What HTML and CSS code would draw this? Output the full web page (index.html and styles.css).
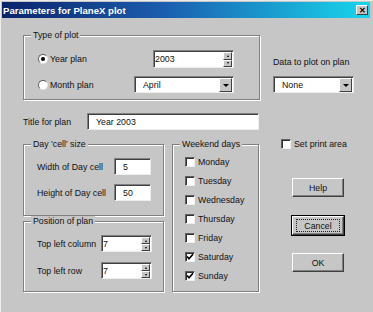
FILE: index.html
```html
<!DOCTYPE html>
<html>

<head>
    <meta charset="utf-8">
    <meta name="viewport" content="width=device-width">
    <title>Parameters for PlaneX plot</title>
    <link rel="stylesheet" href="styles.css">
</head>

<body>
    <div class="window">

        <div class="titlebar">
            <span class="title">Parameters for PlaneX plot</span>
            <span class="close">&#x2715;</span>
        </div>

        <div class="dialog">

            <div class="top-row">
                <fieldset class="group plot-type">
                    <legend>Type of plot</legend>
                    <div class="plot-grid">
                        <div class="opt"><span class="radio on"></span>Year plan</div>
                        <div class="box spin year">
                            <span class="val">2003</span>
                            <span class="spin-btns"><span class="sb up"></span><span class="sb down"></span></span>
                        </div>
                        <div class="opt"><span class="radio"></span>Month plan</div>
                        <div class="box combo month">
                            <span class="val">April</span>
                            <span class="drop"></span>
                        </div>
                    </div>
                </fieldset>

                <div class="data-col">
                    <div class="lbl">Data to plot on plan</div>
                    <div class="box combo data">
                        <span class="val">None</span>
                        <span class="drop"></span>
                    </div>
                </div>
            </div>

            <div class="title-row">
                <span class="title-lbl">Title for plan</span>
                <div class="box plan-title"><span class="val">Year 2003</span></div>
            </div>

            <div class="bottom-row">

                <div class="left-col">
                    <fieldset class="group day-cell">
                        <legend>Day 'cell' size</legend>
                        <div class="field-grid cell-grid">
                            <span>Width of Day cell</span>
                            <div class="box num"><span class="val">5</span></div>
                            <span>Height of Day cell</span>
                            <div class="box num"><span class="val">50</span></div>
                        </div>
                    </fieldset>

                    <fieldset class="group position">
                        <legend>Position of plan</legend>
                        <div class="field-grid pos-grid">
                            <span>Top left column</span>
                            <div class="box spin pos">
                                <span class="val">7</span>
                                <span class="spin-btns"><span class="sb up"></span><span class="sb down"></span></span>
                            </div>
                            <span>Top left row</span>
                            <div class="box spin pos">
                                <span class="val">7</span>
                                <span class="spin-btns"><span class="sb up"></span><span class="sb down"></span></span>
                            </div>
                        </div>
                    </fieldset>
                </div>

                <fieldset class="group weekend">
                    <legend>Weekend days</legend>
                    <div class="days">
                        <div class="day"><span class="check"></span>Monday</div>
                        <div class="day"><span class="check"></span>Tuesday</div>
                        <div class="day"><span class="check"></span>Wednesday</div>
                        <div class="day"><span class="check"></span>Thursday</div>
                        <div class="day"><span class="check"></span>Friday</div>
                        <div class="day"><span class="check on"><svg viewBox="0 0 8 8"><path d="M1 3.5 L3 5.8 L7 1.2"/></svg></span>Saturday</div>
                        <div class="day"><span class="check on"><svg viewBox="0 0 8 8"><path d="M1 3.5 L3 5.8 L7 1.2"/></svg></span>Sunday</div>
                    </div>
                </fieldset>

                <div class="right-col">
                    <div class="day print"><span class="check"></span>Set print area</div>
                    <div class="btn help">Help</div>
                    <div class="btn cancel"><span class="focus">Cancel</span></div>
                    <div class="btn ok">OK</div>
                </div>

            </div>
        </div>
    </div>
</body>

</html>
```

FILE: styles.css
```css
* {
    box-sizing: border-box;
}

body {
    margin: 0;
    background-color: #c6c6c6;
    font-family: "Liberation Sans", Arial, sans-serif;
    font-size: 8.8px;
    color: #111;
}

.window {
    width: 373px;
    height: 312px;
    padding: 2px 3px 0 2px;
    background-color: #c6c6c6;
    box-shadow: inset 1px 1px 0 #ececec;
    overflow: hidden;
}

/* title bar */

.titlebar {
    height: 16px;
    display: flex;
    align-items: center;
    justify-content: space-between;
    padding: 0 2px 0 1px;
    background: linear-gradient(to right, #0a246a 0%, #1c5fb0 45%, #18d6ec 100%);
}

.title {
    color: #fff;
    font-weight: bold;
    font-size: 9.6px;
}

.close {
    width: 12px;
    height: 10px;
    display: flex;
    align-items: center;
    justify-content: center;
    font-size: 8px;
    font-weight: bold;
    color: #000;
    background-color: #c6c6c6;
    border: 1px solid;
    border-color: #fff #404040 #404040 #fff;
}

/* dialog body */

.dialog {
    padding: 12px 0 0 19px;
}

.group {
    margin: 0;
    padding: 0;
    min-width: 0;
    border: 1px solid #808080;
    box-shadow: 1px 1px 0 #fff, inset 1px 1px 0 #fff;
}

.group legend {
    margin-left: 7px;
    padding: 0 2px;
    line-height: 10px;
    background-color: #c6c6c6;
}

.box {
    display: flex;
    align-items: center;
    background-color: #fff;
    border: 1px solid;
    border-color: #808080 #eee #eee #808080;
    box-shadow: inset 1px 1px 0 #404040;
}

.val {
    padding-left: 8px;
    line-height: 10px;
    flex: 1;
}

/* spin boxes */

.spin .val {
    padding-left: 1px;
}

.spin-btns {
    display: flex;
    flex-direction: column;
    align-self: stretch;
    padding: 1px 1px 0 0;
}

.sb {
    width: 9px;
    flex: 1;
    display: flex;
    align-items: center;
    justify-content: center;
    background-color: #c6c6c6;
    border: 1px solid;
    border-color: #fff #404040 #404040 #fff;
}

.sb::after {
    content: "";
    border-left: 1.5px solid transparent;
    border-right: 1.5px solid transparent;
}

.sb.up::after {
    border-bottom: 2px solid #000;
}

.sb.down::after {
    border-top: 2px solid #000;
}

/* combo boxes */

.combo .drop {
    width: 13px;
    align-self: stretch;
    margin: 1px 1px 0 0;
    display: flex;
    align-items: center;
    justify-content: center;
    background-color: #c6c6c6;
    border: 1px solid;
    border-color: #fff #404040 #404040 #fff;
}

.combo .drop::after {
    content: "";
    border-left: 3px solid transparent;
    border-right: 3px solid transparent;
    border-top: 3px solid #000;
}

/* type of plot */

.top-row {
    display: flex;
    align-items: flex-start;
}

.plot-type {
    width: 237px;
    height: 70px;
    margin-left: 2px;
}

.plot-grid {
    display: grid;
    grid-template-columns: 1fr auto;
    row-gap: 8px;
    align-items: center;
    justify-items: end;
    padding: 10px 25px 0 14px;
}

.opt {
    justify-self: start;
    display: flex;
    align-items: center;
    gap: 2px;
}

.radio {
    width: 10px;
    height: 10px;
    border-radius: 50%;
    background-color: #fff;
    border: 1px solid;
    border-color: #606060 #e8e8e8 #e8e8e8 #606060;
    display: flex;
    align-items: center;
    justify-content: center;
}

.radio.on::after {
    content: "";
    width: 4px;
    height: 4px;
    border-radius: 50%;
    background-color: #000;
}

.year {
    width: 81px;
    height: 18px;
}

.month {
    width: 100px;
    height: 17px;
}

.data-col {
    margin-left: 13px;
    padding-top: 27px;
}

.lbl {
    line-height: 10px;
}

.data {
    width: 81px;
    height: 17px;
    margin-top: 9px;
}

/* title row */

.title-row {
    display: flex;
    align-items: center;
    margin: 13px 0 0 2px;
}

.title-lbl {
    width: 64px;
}

.plan-title {
    width: 172px;
    height: 17px;
}

/* lower part */

.bottom-row {
    display: flex;
    align-items: flex-start;
    margin-top: 9px;
}

.left-col {
    width: 141px;
    margin-left: 2px;
}

.day-cell {
    height: 77px;
}

.position {
    height: 76px;
}

.field-grid {
    display: grid;
    align-items: center;
    padding-left: 13px;
}

.cell-grid {
    grid-template-columns: 77px 37px;
    row-gap: 9px;
    padding-top: 9px;
}

.num {
    height: 17px;
}

.pos-grid {
    grid-template-columns: 64px 51px;
    row-gap: 10px;
    padding-top: 9px;
}

.pos {
    height: 17px;
}

.weekend {
    width: 87px;
    height: 153px;
    margin-left: 8px;
}

.days {
    padding: 3px 0 0 12px;
}

.day {
    height: 19px;
    display: flex;
    align-items: center;
    gap: 3px;
}

.check {
    width: 10px;
    height: 10px;
    background-color: #fff;
    border: 1px solid;
    border-color: #606060 #eee #eee #606060;
    box-shadow: inset 1px 1px 0 #303030;
    display: flex;
    align-items: center;
    justify-content: center;
}

.check svg {
    width: 8px;
    height: 8px;
    fill: none;
    stroke: #000;
    stroke-width: 1.7;
}

.right-col {
    margin-left: 22px;
}

.print {
    height: 10px;
}

.btn {
    width: 52px;
    height: 19px;
    margin-left: 11px;
    display: flex;
    align-items: center;
    justify-content: center;
    background-color: #c6c6c6;
    border: 1px solid;
    border-color: #fff #404040 #404040 #fff;
    box-shadow: inset -1px -1px 0 #808080;
}

.help {
    margin-top: 29px;
}

.cancel {
    margin-top: 19px;
    outline: 1px solid #000;
}

.cancel .focus {
    width: 44px;
    height: 13px;
    display: flex;
    align-items: center;
    justify-content: center;
    border: 1px dotted #222;
}

.ok {
    margin-top: 18px;
}
```
